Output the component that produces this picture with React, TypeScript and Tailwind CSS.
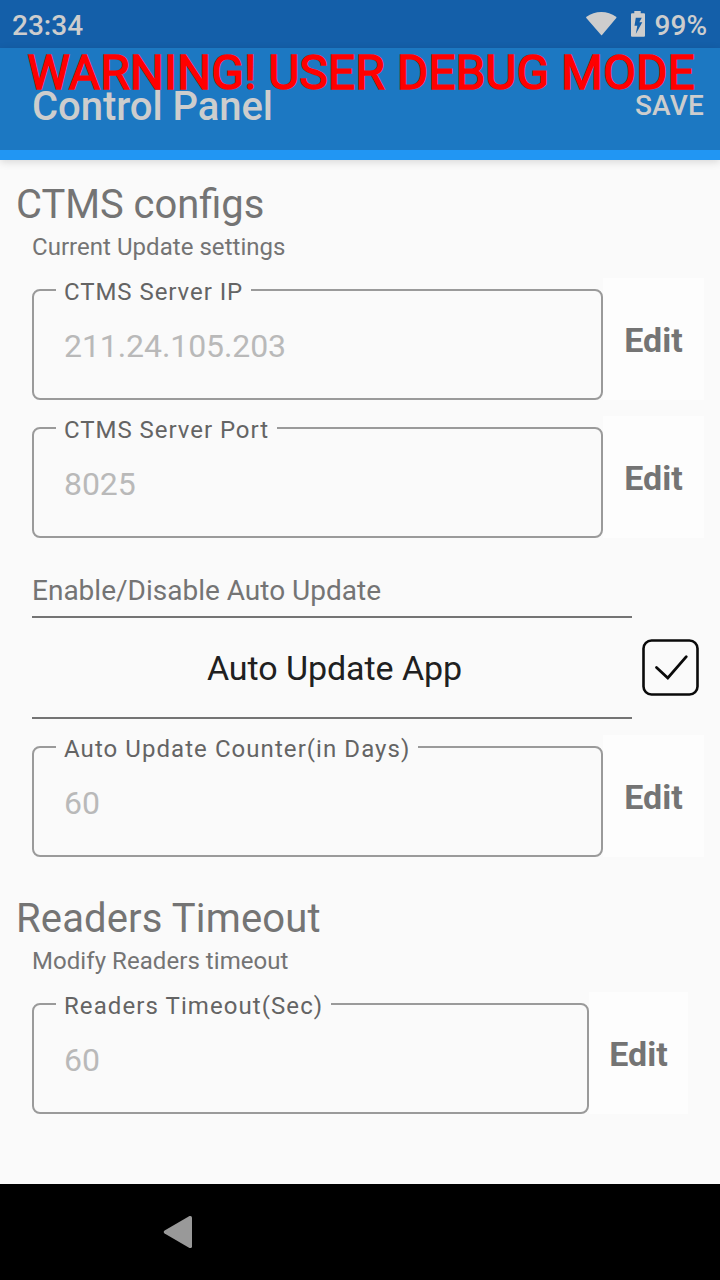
type FieldProps = { label: string; value: string; spacing: string; wide?: boolean };

function EditableField({ label, value, spacing, wide = true }: FieldProps) {
  return (
    <div className={wide ? "flex h-[122px] w-[672px]" : "flex h-[122px] w-[656px]"}>
      <fieldset className="h-full min-w-0 flex-1 rounded-lg border-2 border-[#9a9a9a]">
        <legend className={`ml-[22px] h-6 px-2 pt-1 text-2xl/5 whitespace-nowrap text-[#646464] ${spacing}`}>
          {label}
        </legend>
        <div className="pt-[24px] pl-[30px] text-[32px]/[40px] tracking-[-0.08px] text-[#b9b9b9]">{value}</div>
      </fieldset>
      <button
        className={
          wide
            ? "h-full w-[101px] bg-[#fdfdfd] pt-px text-[34px]/[40px] font-bold text-[#747474]"
            : "h-full w-[99px] bg-[#fdfdfd] pt-px text-[34px]/[40px] font-bold text-[#747474]"
        }
      >
        Edit
      </button>
    </div>
  );
}

function StatusBar() {
  return (
    <div className="flex h-12 items-center justify-between bg-[#145fa9] pr-[13px] pl-3 text-[28px]/[28px] font-medium text-[#cdcdcd]">
      <span className="pt-[3px]">23:34</span>
      <div className="flex items-center">
        <svg className="h-6 w-8" viewBox="0 0 32 24" fill="currentColor">
          <path d="M15.300 23.200.3 5.900Q-.1 5.200.5 4.800C4.800 1.500 9.900 0 15.300 0s10.500 1.500 14.800 4.800q.600.400.200 1.100L15.800 23.200q-.250.300-.500 0Z" />
        </svg>
        <svg className="ml-3 h-[26px] w-[16px]" viewBox="0 0 16 26" fill="currentColor" fillRule="evenodd">
          <path d="M4.300 0h6.400v2.300h3.300q1 0 1 1v21.500q0 1-1 1H2Q1 25.800 1 24.800V3.300q0-1 1-1h2.300ZM5.800 6.800 4.500 14.700h2.800l-1.500 8.200 6.500-11.700H9.300l2.500-4.400Z" />
        </svg>
        <span className="pt-[3px] pl-[9px]">99%</span>
      </div>
    </div>
  );
}

export default function App() {
  return (
    <div className="relative flex h-[1280px] w-[720px] flex-col overflow-hidden bg-[#fafafa] font-['Roboto',sans-serif]">
      <StatusBar />
      <header className="flex h-28 items-start justify-between border-b-10 border-[#2196f3] bg-[#1c78c2] pr-4 pl-8 font-medium text-[#cdcdcd] shadow-[0_2px_8px_rgba(0,0,0,0.14)]">
        <h1 className="pt-[39px] text-[40px]/[40px] tracking-[-0.05px]">Control Panel</h1>
        <button className="pt-[44px] text-[28px]/[28px] tracking-[0.2px]">SAVE</button>
      </header>
      <div className="absolute top-[48px] left-0 w-full pl-[2px] text-center text-[48px]/[50px] font-normal whitespace-nowrap text-[#ff0000] [-webkit-text-stroke:1.5px_#ff0000]">
        WARNING! USER DEBUG MODE
      </div>

      <main className="flex flex-1 flex-col pt-[25px] text-[#747474]">
        <h2 className="pl-4 text-[39.9px]/[40px]">CTMS configs</h2>
        <p className="h-[53px] pt-[8px] pl-8 text-2xl/7 tracking-[0.04px]">Current Update settings</p>
        <div className="flex flex-col gap-4 pl-8">
          <EditableField label="CTMS Server IP" value="211.24.105.203" spacing="tracking-[0.94px]" />
          <EditableField label="CTMS Server Port" value="8025" spacing="tracking-[0.96px]" />
        </div>

        <p className="h-[78px] pt-[37px] pl-8 text-[28px]/8">Enable/Disable Auto Update</p>
        <div className="flex h-[103px] pl-8">
          <div className="flex w-[600px] items-center justify-center border-y-2 border-[#747474] pl-[5px] text-[34px]/[40px] tracking-[-0.06px] text-[#202020]">
            Auto Update App
          </div>
          <svg className="mt-[23px] ml-[10px] h-[57px] w-[57px]" viewBox="0 0 57 57" fill="none" stroke="#0a0a0a">
            <rect x="1.500" y="1.500" width="54" height="54" rx="8" strokeWidth="2.600" />
            <path d="m14.500 28.500 11.300 10.500L44.300 17.700" strokeWidth="2.800" strokeLinecap="round" />
          </svg>
        </div>
        <div className="pt-4 pl-8">
          <EditableField label="Auto Update Counter(in Days)" value="60" spacing="tracking-[1.06px]" />
        </div>

        <h2 className="pt-[42px] pl-4 text-[40px]/[40px] tracking-[0.14px]">Readers Timeout</h2>
        <p className="h-[53px] pt-[8px] pl-8 text-2xl/7 tracking-[0.06px]">Modify Readers timeout</p>
        <div className="pl-8">
          <EditableField label="Readers Timeout(Sec)" value="60" spacing="tracking-[1.08px]" wide={false} />
        </div>
      </main>

      <nav className="flex h-24 items-center bg-black pl-[163px]">
        <svg className="h-[34px] w-[30px]" viewBox="0 0 30 34" fill="#999">
          <path d="M1.600 15.400 26.500 1.100q2.500-.700 2.500 1.700v28.400q0 2.400-2.500 1.700L1.600 18.400q-1.800-1.500 0-3Z" />
        </svg>
      </nav>
    </div>
  );
}
